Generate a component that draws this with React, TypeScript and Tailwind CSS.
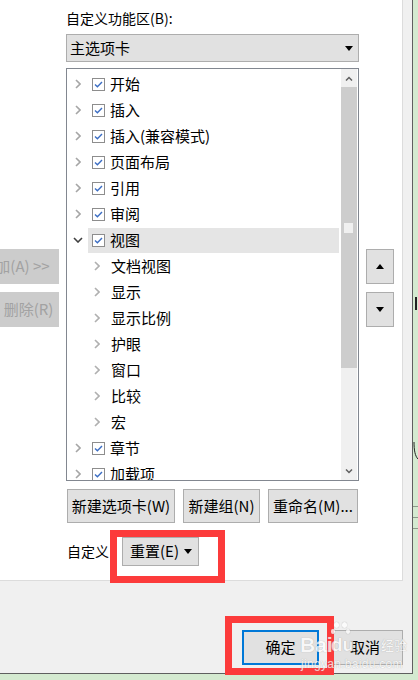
import React from 'react';

type Item = { label: string; child?: boolean; expanded?: boolean; selected?: boolean };

const items: Item[] = [
    { label: '开始' },
    { label: '插入' },
    { label: '插入(兼容模式)' },
    { label: '页面布局' },
    { label: '引用' },
    { label: '审阅' },
    { label: '视图', expanded: true, selected: true },
    { label: '文档视图', child: true },
    { label: '显示', child: true },
    { label: '显示比例', child: true },
    { label: '护眼', child: true },
    { label: '窗口', child: true },
    { label: '比较', child: true },
    { label: '宏', child: true },
    { label: '章节' },
    { label: '加载项' },
];

function ChevronRight({ color = '#a6a6a6' }: { color?: string }) {
    return (
        <svg width="6" height="10" viewBox="0 0 6 10">
            <path d="M1 1l4 4-4 4" fill="none" stroke={color} strokeWidth="1.6" />
        </svg>
    );
}

function ChevronDown() {
    return (
        <svg width="10" height="6" viewBox="0 0 10 6">
            <path d="M1 1l4 4 4-4" fill="none" stroke="#404040" strokeWidth="1.6" />
        </svg>
    );
}

function Checkbox() {
    return (
        <span className="flex h-[13px] w-[13px] items-center justify-center border border-[#8d8d8d] bg-white">
            <svg width="9" height="7" viewBox="0 0 9 7">
                <path d="M1 3.5l2.4 2.3L8 1" fill="none" stroke="#3b6dc3" strokeWidth="1.4" />
            </svg>
        </span>
    );
}

function Triangle({ up }: { up?: boolean }) {
    return (
        <svg width="8" height="5" viewBox="0 0 8 5">
            <path d={up ? 'M0 5h8L4 0z' : 'M0 0h8L4 5z'} fill="#000" />
        </svg>
    );
}

function TreeRow({ item }: { item: Item }) {
    if (item.child) {
        return (
            <div className="flex h-[26px] items-center">
                <span className="w-[21px]" />
                <span className="flex w-[17px] justify-center"><ChevronRight color="#b0b0b0" /></span>
                <span className="ml-[6px] text-[15px] leading-[26px]">{item.label}</span>
            </div>
        );
    }
    return (
        <div className="flex h-[26px] items-center">
            <span className="flex w-[21px] justify-center">
                {item.expanded ? <ChevronDown /> : <ChevronRight />}
            </span>
            <div className={`mr-[2px] flex h-[25px] flex-1 items-center pl-[4px] ${item.selected ? 'bg-[#e5e5e5]' : ''}`}>
                <Checkbox />
                <span className="ml-[5px] text-[15px] leading-[26px] whitespace-nowrap">{item.label}</span>
            </div>
        </div>
    );
}

export default function App() {
    return (
        <div className="relative h-[680px] w-[418px] overflow-hidden bg-[#d4ead0] font-['Noto_Sans_CJK_SC','Liberation_Sans',sans-serif] text-black">
            <div className="flex h-[674px] w-[413px] flex-col border-r border-b border-[#5f5f5f] bg-[#f0f0f0]">
                {/* White content panel */}
                <div className="flex h-[581px] w-[403px] border-r border-b border-[#dcdcdc] bg-white">
                    {/* Left add/remove buttons (clipped) */}
                    <div className="flex w-[59px] flex-col gap-[8px] overflow-hidden pt-[249px]">
                        <div className="-ml-[29px] flex h-[35px] w-[88px] shrink-0 items-center justify-center bg-[#cccccc] text-[15px] whitespace-nowrap text-[#a2a2a2]">
                            添加(A) &gt;&gt;
                        </div>
                        <div className="-ml-[2px] flex h-[35px] w-[61px] shrink-0 items-center justify-center bg-[#cccccc] text-[15px] whitespace-nowrap text-[#a2a2a2]">
                            删除(R)
                        </div>
                    </div>

                    {/* Middle column */}
                    <div className="ml-[7px] flex w-[293px] flex-col pt-[8px]">
                        <div className="h-[20px] text-[14px] leading-[20px]">自定义功能区(B):</div>

                        <div className="mt-[6px] flex h-[28px] items-center justify-between border border-[#adadad] bg-[#e1e1e1] pr-[5px] pl-[3px]">
                            <span className="text-[15px] leading-[26px]">主选项卡</span>
                            <Triangle />
                        </div>

                        <div className="mt-[6px] flex h-[413px] border border-[#828790] bg-white">
                            <div className="flex-1 overflow-hidden pt-[2px]">
                                {items.map((item) => (
                                    <TreeRow key={item.label} item={item} />
                                ))}
                            </div>
                            {/* Scrollbar */}
                            <div className="mr-[1px] flex w-[16px] flex-col bg-[#f0f0f0]">
                                <div className="flex h-[18px] items-center justify-center">
                                    <svg width="8" height="5" viewBox="0 0 8 5">
                                        <path d="M1 4.5l3-3 3 3" fill="none" stroke="#606060" strokeWidth="1.5" />
                                    </svg>
                                </div>
                                <div className="relative h-[281px] bg-[#cdcdcd]">
                                    <span className="absolute top-[136px] left-[3px] h-[10px] w-[9px] bg-[#f0f0f0]" />
                                </div>
                                <div className="flex-1" />
                                <div className="flex h-[18px] items-center justify-center">
                                    <svg width="8" height="5" viewBox="0 0 8 5">
                                        <path d="M1 0.5l3 3 3-3" fill="none" stroke="#606060" strokeWidth="1.5" />
                                    </svg>
                                </div>
                            </div>
                        </div>

                        <div className="mt-[8px] ml-[1px] flex gap-[8px]">
                            <div className="flex h-[34px] w-[108px] items-center justify-center border border-[#adadad] bg-[#e1e1e1] text-[15px]">新建选项卡(W)</div>
                            <div className="flex h-[34px] w-[77px] items-center justify-center border border-[#adadad] bg-[#e1e1e1] text-[15px]">新建组(N)</div>
                            <div className="flex h-[34px] w-[90px] items-center justify-center border border-[#adadad] bg-[#e1e1e1] text-[15px]">重命名(M)...</div>
                        </div>

                        <div className="mt-[14px] ml-[1px] flex items-center">
                            <span className="text-[14px]">自定义</span>
                            <div className="ml-[13px] flex h-[29px] w-[77px] items-center justify-between border border-[#adadad] bg-[#e1e1e1] pr-[6px] pl-[7px]">
                                <span className="text-[15px]">重置(E)</span>
                                <Triangle />
                            </div>
                        </div>
                    </div>

                    {/* Right move up/down */}
                    <div className="ml-[7px] flex flex-col gap-[8px] pt-[249px]">
                        <div className="flex h-[35px] w-[28px] items-center justify-center border border-[#adadad] bg-[#e1e1e1]"><Triangle up /></div>
                        <div className="flex h-[35px] w-[28px] items-center justify-center border border-[#adadad] bg-[#e1e1e1]"><Triangle /></div>
                    </div>
                </div>

                {/* Dialog footer */}
                <div className="flex flex-1 items-start justify-end gap-[8px] pt-[49px] pr-[9px]">
                    <div className="flex h-[35px] w-[77px] items-center justify-center border-2 border-[#0078d7] bg-[#e1e1e1] text-[15px]">确定</div>
                    <div className="flex h-[35px] w-[76px] items-center justify-center border border-[#adadad] bg-[#e1e1e1] text-[15px]">取消</div>
                </div>
            </div>

            {/* Background window bits on the right */}
            <span className="absolute top-[297px] left-[415px] h-[13px] w-[2px] bg-[#222]" />
            <svg className="absolute top-[440px] left-[413px]" width="5" height="22" viewBox="0 0 5 22">
                <path d="M1 2c0 8 1 14 4 17" fill="none" stroke="#222" strokeWidth="1" />
            </svg>
            <span className="absolute top-[506px] left-[413px] h-px w-[5px] bg-[#8c9a8a]" />
            <span className="absolute top-[517px] left-[413px] h-px w-[5px] bg-[#8c9a8a]" />
            <span className="absolute top-[528px] left-[413px] h-px w-[5px] bg-[#8c9a8a]" />

            {/* Red annotation boxes */}
            <div className="absolute top-[530px] left-[110px] h-[53px] w-[115px] border-[7px] border-[#fc3b3b]" />
            <div className="absolute top-[616px] left-[225px] h-[59px] w-[109px] border-[7px] border-[#fc3b3b]" />

            {/* Watermark */}
            <div className="pointer-events-none absolute top-[631px] left-[300px] font-['Liberation_Sans',sans-serif] text-[21px] leading-[28px] font-bold text-white opacity-75 [text-shadow:0_0_1px_#8a8a8a]">
                Bai
            </div>
            <div className="pointer-events-none absolute top-[622px] left-[331px] h-[18px] w-[19px] opacity-75">
                <span className="absolute top-0 left-[3px] h-[6px] w-[5px] rounded-full bg-white shadow-[0_0_1px_#8a8a8a]" />
                <span className="absolute top-0 left-[11px] h-[6px] w-[5px] rounded-full bg-white shadow-[0_0_1px_#8a8a8a]" />
                <span className="absolute top-[7px] left-0 h-[5px] w-[4px] rounded-full bg-white shadow-[0_0_1px_#8a8a8a]" />
                <span className="absolute top-[7px] left-[15px] h-[5px] w-[4px] rounded-full bg-white shadow-[0_0_1px_#8a8a8a]" />
            </div>
            <div className="pointer-events-none absolute top-[632px] left-[331px] font-['Liberation_Sans',sans-serif] text-[19px] leading-[26px] font-bold text-white opacity-75 [text-shadow:0_0_1px_#8a8a8a]">
                du
            </div>
            <div className="pointer-events-none absolute top-[637px] left-[381px] text-[13px] leading-[16px] text-white opacity-75 [text-shadow:0_0_1px_#8a8a8a]">
                经验
            </div>
            <div className="pointer-events-none absolute top-[657px] left-[301px] font-['Liberation_Sans',sans-serif] text-[12px] leading-[14px] tracking-[0.3px] text-white opacity-75 [text-shadow:0_0_1px_#8a8a8a]">
                jingyan.baidu.com
            </div>
        </div>
    );
}
